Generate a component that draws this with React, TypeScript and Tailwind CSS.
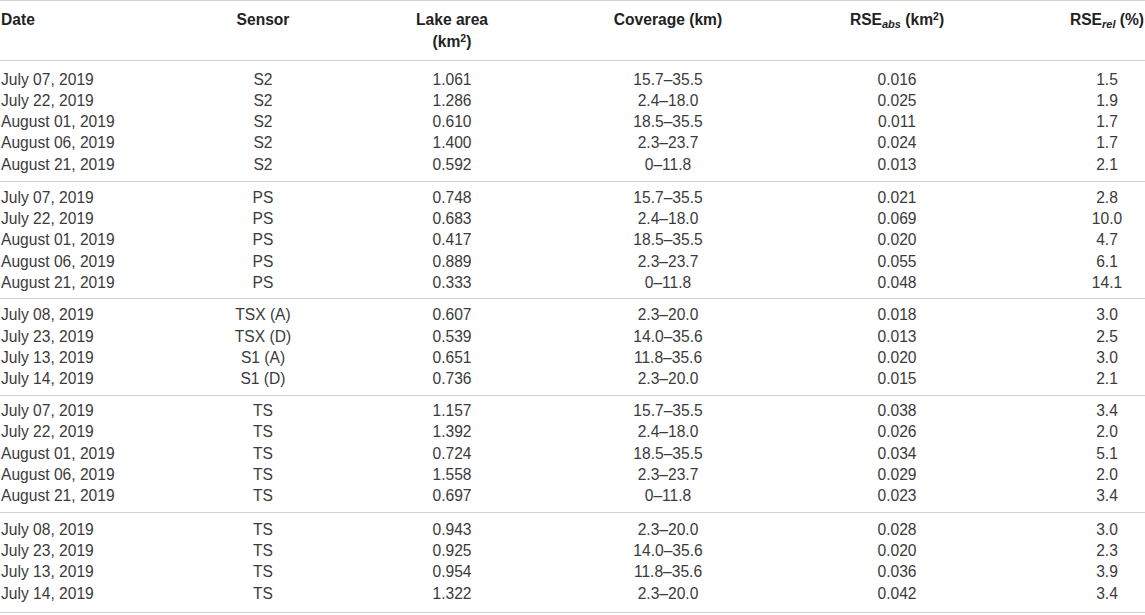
type Row = [string, string, string, string, string, string];

// rows grouped as in the source table, each group ends with a rule
const groups: { rows: Row[]; pad: string }[] = [
  {
    pad: 'pt-[7.5px] pb-[5.5px]',
    rows: [
      ['July 07, 2019', 'S2', '1.061', '15.7–35.5', '0.016', '1.5'],
      ['July 22, 2019', 'S2', '1.286', '2.4–18.0', '0.025', '1.9'],
      ['August 01, 2019', 'S2', '0.610', '18.5–35.5', '0.011', '1.7'],
      ['August 06, 2019', 'S2', '1.400', '2.3–23.7', '0.024', '1.7'],
      ['August 21, 2019', 'S2', '0.592', '0–11.8', '0.013', '2.1'],
    ],
  },
  {
    pad: 'pt-[5px] pb-[5px]',
    rows: [
      ['July 07, 2019', 'PS', '0.748', '15.7–35.5', '0.021', '2.8'],
      ['July 22, 2019', 'PS', '0.683', '2.4–18.0', '0.069', '10.0'],
      ['August 01, 2019', 'PS', '0.417', '18.5–35.5', '0.020', '4.7'],
      ['August 06, 2019', 'PS', '0.889', '2.3–23.7', '0.055', '6.1'],
      ['August 21, 2019', 'PS', '0.333', '0–11.8', '0.048', '14.1'],
    ],
  },
  {
    pad: 'pt-[5px] pb-[5px]',
    rows: [
      ['July 08, 2019', 'TSX (A)', '0.607', '2.3–20.0', '0.018', '3.0'],
      ['July 23, 2019', 'TSX (D)', '0.539', '14.0–35.6', '0.013', '2.5'],
      ['July 13, 2019', 'S1 (A)', '0.651', '11.8–35.6', '0.020', '3.0'],
      ['July 14, 2019', 'S1 (D)', '0.736', '2.3–20.0', '0.015', '2.1'],
    ],
  },
  {
    pad: 'pt-[4.5px] pb-[5.5px]',
    rows: [
      ['July 07, 2019', 'TS', '1.157', '15.7–35.5', '0.038', '3.4'],
      ['July 22, 2019', 'TS', '1.392', '2.4–18.0', '0.026', '2.0'],
      ['August 01, 2019', 'TS', '0.724', '18.5–35.5', '0.034', '5.1'],
      ['August 06, 2019', 'TS', '1.558', '2.3–23.7', '0.029', '2.0'],
      ['August 21, 2019', 'TS', '0.697', '0–11.8', '0.023', '3.4'],
    ],
  },
  {
    pad: 'pt-[5.5px] pb-[8px]',
    rows: [
      ['July 08, 2019', 'TS', '0.943', '2.3–20.0', '0.028', '3.0'],
      ['July 23, 2019', 'TS', '0.925', '14.0–35.6', '0.020', '2.3'],
      ['July 13, 2019', 'TS', '0.954', '11.8–35.6', '0.036', '3.9'],
      ['July 14, 2019', 'TS', '1.322', '2.3–20.0', '0.042', '3.4'],
    ],
  },
];

const cols = 'grid grid-cols-[233px_60px_318px_114px_344px_76px]';

function Header() {
  return (
    <div className={`${cols} border-t border-b border-[#d2d2d2] pt-[8px] pb-[7px] font-bold text-[#222] leading-[22px]`}>
      <div className="pl-px">Date</div>
      <div className="text-center whitespace-nowrap">Sensor</div>
      <div className="text-center">
        Lake area
        <br />
        (km<sup className="text-[10.5px]">2</sup>)
      </div>
      <div className="text-center whitespace-nowrap">Coverage (km)</div>
      <div className="text-center whitespace-nowrap">
        RSE<sub className="text-[11px] italic">abs</sub> (km<sup className="text-[10.5px]">2</sup>)
      </div>
      <div className="text-center whitespace-nowrap">
        RSE<sub className="text-[11px] italic">rel</sub> (%)
      </div>
    </div>
  );
}

export default function App() {
  return (
    <div className="w-[1145px] h-[615px] overflow-hidden bg-white font-['Liberation_Sans',Arial,sans-serif] text-[15.6px] text-[#3b3b3b]">
      <Header />
      {groups.map((g, gi) => (
        <div key={gi} className={`${g.pad} border-b border-[#d2d2d2]`}>
          {g.rows.map((r, ri) => (
            <div key={ri} className={`${cols} leading-[21.33px] h-[21.33px]`}>
              <div className="pl-px whitespace-nowrap">{r[0]}</div>
              {r.slice(1).map((c, ci) => (
                <div key={ci} className="text-center whitespace-nowrap">
                  {c}
                </div>
              ))}
            </div>
          ))}
        </div>
      ))}
    </div>
  );
}
